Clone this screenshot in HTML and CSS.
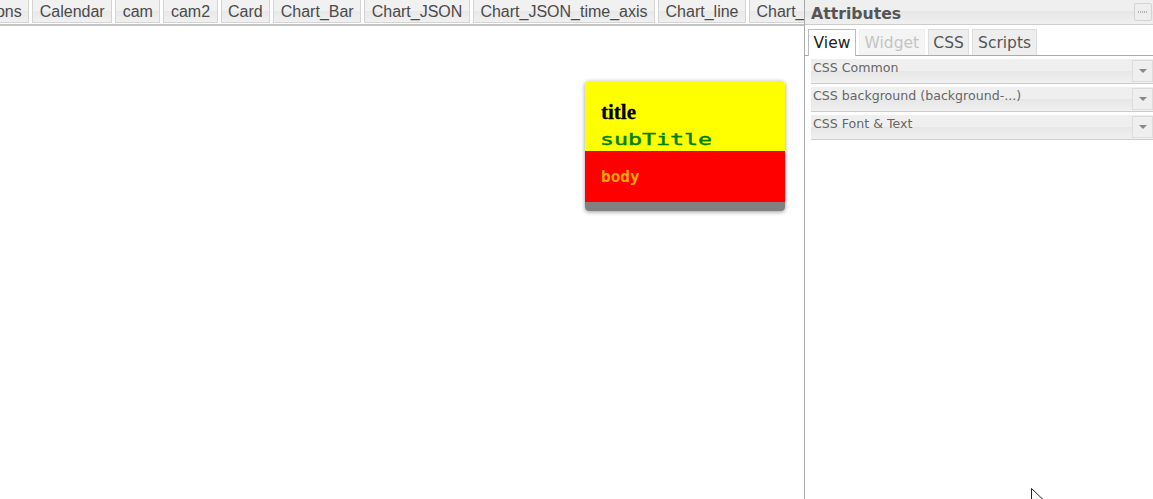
FILE: index.html
```html
<!DOCTYPE html>
<html lang="en">
<head>
<meta charset="utf-8">
<title>Editor</title>
<link rel="stylesheet" href="styles.css">
</head>
<body>
<div class="app">
  <main class="main">
    <nav class="tabbar">
      <div class="tabstrip">
        <span class="tab">Buttons</span>
        <span class="tab">Calendar</span>
        <span class="tab">cam</span>
        <span class="tab">cam2</span>
        <span class="tab">Card</span>
        <span class="tab">Chart_Bar</span>
        <span class="tab">Chart_JSON</span>
        <span class="tab">Chart_JSON_time_axis</span>
        <span class="tab">Chart_line</span>
        <span class="tab">Chart_</span>
      </div>
    </nav>
    <section class="canvas">
      <article class="card">
        <header class="card-head">
          <div class="card-title">title</div>
          <div class="card-sub">subTitle</div>
        </header>
        <div class="card-body">body</div>
        <div class="card-foot"></div>
      </article>
    </section>
  </main>
  <aside class="panel">
    <div class="panel-head">
      <h2 class="panel-title">Attributes</h2>
      <button class="menu-btn" type="button" aria-label="Menu">
        <svg width="10" height="3" viewBox="0 0 10 3"><path d="M0 1h1M2 1h1M4 1h1M6 1h1M8 1h1" stroke="#777" stroke-width="1" fill="none"/></svg>
      </button>
    </div>
    <div class="ptabs">
      <span class="ptab active">View</span>
      <span class="ptab disabled">Widget</span>
      <span class="ptab">CSS</span>
      <span class="ptab">Scripts</span>
    </div>
    <div class="groups">
      <div class="group"><span class="group-label">CSS Common</span><span class="drop"><i class="arrow"></i></span></div>
      <div class="group"><span class="group-label">CSS background (background-...)</span><span class="drop"><i class="arrow"></i></span></div>
      <div class="group"><span class="group-label">CSS Font &amp; Text</span><span class="drop"><i class="arrow"></i></span></div>
    </div>
  </aside>
</div>
<svg class="cursor" width="14" height="12" viewBox="0 0 14 12"><path d="M0.5 0.5V11M0.5 0.5L12 11.5" stroke="#222" stroke-width="1" fill="none"/></svg>
</body>
</html>
```
FILE: styles.css
```css
html, body { margin: 0; padding: 0; height: 100%; overflow: hidden; background: #fff; }
body { font-family: "Liberation Sans", Arial, sans-serif; color: #444; }
.app { display: flex; height: 499px; }
.main { width: 804px; flex: none; display: flex; flex-direction: column; border-right: 1px solid #aaa; }
.tabbar { height: 24px; flex: none; overflow: hidden; border-bottom: 2px solid #c4c4c4; }
.tabstrip { display: flex; gap: 3px; margin-left: -40px; white-space: nowrap; }
.tab { flex: none; box-sizing: border-box; height: 23px; padding: 0 6.5px; line-height: 23px; font-size: 16px; color: #4a4a4a; background: linear-gradient(#f1f1f1 0 50%, #e8e8e8 50%, #f0f0f0 100%); border: 1px solid #d4d4d4; border-top: 0; }
.canvas { flex: 1; position: relative; background: #fff; }
.card { position: absolute; left: 585px; top: 55px; width: 200px; border-radius: 4px; overflow: hidden; box-shadow: 0 1px 4px rgba(0,0,0,.4); }
.card-head { height: 70px; box-sizing: border-box; padding: 20px 16px 0; background: #ff0; }
.card-title { font: bold 21px/22px "Liberation Serif", serif; color: #000; -webkit-text-stroke: .3px #000; }
.card-sub { font: 15px/20px "DejaVu Sans Mono", monospace; color: green; margin: 7px 0 0 -1.5px; -webkit-text-stroke: .4px green; transform: scaleX(1.55); transform-origin: left center; }
.card-body { height: 51px; box-sizing: border-box; padding: 16px 16px 0; background: #f00; font: bold 16px/20px "DejaVu Sans Mono", monospace; color: orange; }
.card-foot { height: 9px; background: #808080; }
.panel { flex: 1; min-width: 0; }
.panel-head { height: 25px; box-sizing: border-box; display: flex; align-items: center; justify-content: space-between; padding: 0 1px 0 6px; border-bottom: 1px solid #ccc; background: linear-gradient(#efefef 0 45%, #e6e6e6 45%, #f0f0f0 100%); }
.panel-title { margin: 0; padding-top: 2px; font: bold 15.7px/23px "DejaVu Sans", sans-serif; color: #555; }
.menu-btn { width: 18px; height: 18px; padding: 0; display: flex; align-items: center; justify-content: center; background: #eee; border: 1px solid #d4d4d4; border-radius: 2px; }
.ptabs { display: flex; gap: 3px; height: 31px; box-sizing: border-box; padding: 4px 0 0 3px; border-bottom: 1px solid #aaa; }
.ptab { box-sizing: border-box; height: 26px; padding: 0 4.6px; font: 15.5px/27px "DejaVu Sans", sans-serif; color: #555; background: #eee; border: 1px solid #ddd; border-bottom: 0; }
.ptab.active { background: #fff; color: #222; border-color: #bbb; height: 27px; }
.ptab.disabled { color: #c4c4c4; background: #f4f4f4; border-color: #f0f0f0; }
.groups { padding: 3px 0 0 6px; display: flex; flex-direction: column; gap: 3px; }
.group { position: relative; height: 25px; box-sizing: border-box; padding-left: 2px; border-bottom: 1px solid #ccc; background: linear-gradient(#efefef 0 50%, #e6e6e6 50%, #f0f0f0 100%); font: 12.6px/18px "DejaVu Sans", sans-serif; color: #666; }
.drop { position: absolute; right: 0; top: 1px; width: 21px; height: 22px; box-sizing: border-box; border: 1px solid #ddd; background: #efefef; display: flex; align-items: center; justify-content: center; }
.arrow { width: 0; height: 0; border-left: 4px solid transparent; border-right: 4px solid transparent; border-top: 4px solid #888; }
.cursor { position: absolute; left: 1031px; top: 488px; }
```
